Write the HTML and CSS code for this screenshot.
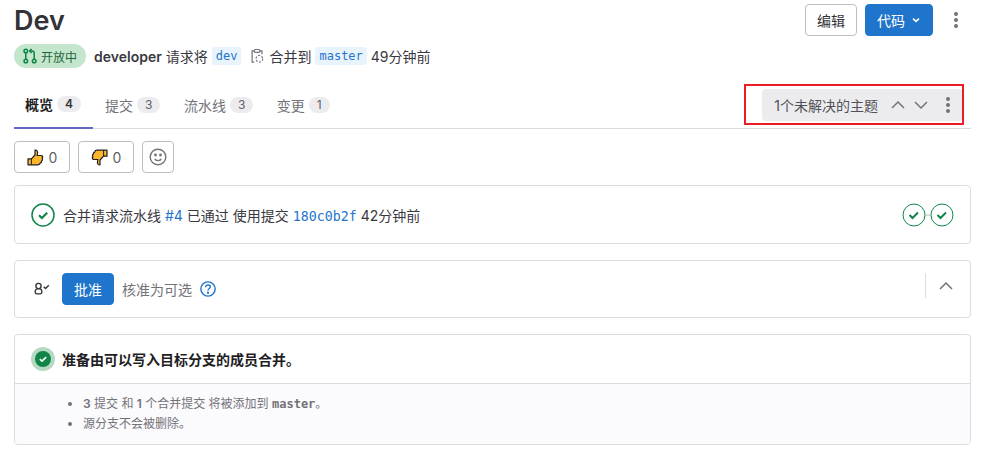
FILE: index.html
```html
<!DOCTYPE html>
<html lang="zh">
<head>
<meta charset="UTF-8" />
<title>Dev</title>
<link rel="stylesheet" href="styles.css">
</head>
<body>
<div class="title-row">
<h1>Dev</h1>
<div class="title-actions">
<button class="btn">编辑</button>
<button class="btn btn-primary">代码
<svg class="caret" width="10" height="10" viewBox="0 0 10 10"><path d="M2 3.600 5 6.400 8 3.600" fill="none" stroke="#fff" stroke-width="1.500"/></svg>
</button>
<span class="kebab kebab-top"><i></i><i></i><i></i></span>
</div>
</div>

<div class="meta-row">
<span class="status-pill">
<svg width="14" height="16" viewBox="0 0 14 16" fill="none" stroke="#108548" stroke-width="1.500"><circle cx="2.800" cy="3" r="1.800"/><circle cx="2.800" cy="13" r="1.800"/><circle cx="11.200" cy="13" r="1.800"/><path d="M2.800 5v6M11.200 11V5.500C11.200 4 10.400 3 9 3H7"/><path d="M8.600 1 6.600 3l2 2"/></svg>
开放中</span>
<b class="author">developer</b><span class="after-author">请求将</span>
<code class="ref">dev</code>
<svg class="copy-icon" width="13" height="16" viewBox="0 0 14 16" fill="none" stroke="#737278" stroke-width="1.300"><path d="M3.500 2.500H1.200v12h2.300M9.500 2.500h2.300v3.500"/><rect x="3.500" y="1" width="6" height="3" rx="1"/><circle cx="9" cy="11" r="3.600" stroke-dasharray="2.200 1.600"/></svg>
<span>合并到</span>
<code class="ref">master</code>
<span>49分钟前</span>
</div>

<div class="tabs">
<a class="tab active">概览 <span class="count">4</span></a>
<a class="tab">提交 <span class="count">3</span></a>
<a class="tab">流水线 <span class="count">3</span></a>
<a class="tab">变更 <span class="count">1</span></a>
<div class="threads">
<span class="threads-label">1个未解决的主题</span>
<svg width="14" height="14" viewBox="0 0 14 14" fill="none" stroke="#737278" stroke-width="1.500"><path d="M1 10 7 4l6 6"/></svg>
<svg width="14" height="14" viewBox="0 0 14 14" fill="none" stroke="#737278" stroke-width="1.500"><path d="M1 4l6 6 6-6"/></svg>
<span class="kebab"><i></i><i></i><i></i></span>
</div>
<div class="highlight"></div>
</div>

<div class="awards">
<button class="award">
<svg width="17" height="17" viewBox="0 0 17 17"><path d="M1 15.800V9.800h3.400L8 6V1.200c2-.2 2.900 1.300 2.500 3.300l-.4 2h3.900c1.700 0 2.200 1.800 1.100 2.600.8.900.5 2.200-.5 2.600.3 1-.3 2-1.300 2.200-.2 1-1 1.900-2.300 1.900z" fill="#fcb62c" stroke="#1f1e24" stroke-width="1.200" stroke-linejoin="round"/><path d="M4.400 10v5.800" stroke="#1f1e24" stroke-width="1"/></svg>
<span>0</span></button>
<button class="award">
<svg width="17" height="17" viewBox="0 0 17 17"><path d="M16 1.200v6h-3.400L9 11v4.800c-2 .2-2.900-1.300-2.500-3.300l.4-2H3c-1.700 0-2.200-1.800-1.100-2.600C1.100 7 1.400 5.700 2.400 5.300c-.3-1 .3-2 1.300-2.200C3.900 2.100 4.700 1.200 6 1.200z" fill="#fcb62c" stroke="#1f1e24" stroke-width="1.200" stroke-linejoin="round"/><path d="M12.600 1.200v6" stroke="#1f1e24" stroke-width="1"/></svg>
<span>0</span></button>
<button class="award award-add">
<svg width="18" height="18" viewBox="0 0 18 18" fill="none" stroke="#737278" stroke-width="1.400"><circle cx="9" cy="9" r="7.800"/><path d="M5.800 11c.7 1 1.900 1.600 3.200 1.600s2.500-.6 3.200-1.600"/><circle cx="6.500" cy="7" r=".7" fill="#737278"/><circle cx="11.500" cy="7" r=".7" fill="#737278"/></svg>
</button>
</div>

<div class="card pipeline">
<svg class="status-ring" width="24" height="24" viewBox="0 0 24 24" fill="none"><circle cx="12" cy="12" r="11" stroke="#108548" stroke-width="1.500"/><path d="M8 12.200l2.900 2.800L16.200 9.800" stroke="#108548" stroke-width="2.200"/></svg>
<span class="pipeline-text">合并请求流水线 <a>#4</a> 已通过 使用提交 <a class="sha">180c0b2f</a> 42分钟前</span>
<div class="stages">
<svg width="24" height="24" viewBox="0 0 24 24" fill="none"><circle cx="12" cy="12" r="11" stroke="#108548" stroke-width="1"/><path d="M7.500 12l3 3 5.500-5.500" stroke="#108548" stroke-width="2"/></svg>
<span class="stage-line"></span>
<svg width="24" height="24" viewBox="0 0 24 24" fill="none"><circle cx="12" cy="12" r="11" stroke="#108548" stroke-width="1"/><path d="M7.500 12l3 3 5.500-5.500" stroke="#108548" stroke-width="2"/></svg>
</div>
</div>

<div class="card approval">
<svg class="approver-icon" width="16" height="14" viewBox="0 0 18 16" fill="none" stroke="#333238" stroke-width="1.500"><circle cx="5" cy="4.500" r="3"/><path d="M5 7.500c-2.400 0-3.800 1.500-3.800 3.200v1c0 1.100.9 1.800 2 1.800h3.600c1.100 0 2-.7 2-1.800v-1c0-1.700-1.400-3.200-3.800-3.200z"/><path d="M11 5.500 13 7.500 16.800 3.600" stroke-width="1.600"/></svg>
<button class="btn btn-primary btn-approve">批准</button>
<span class="approval-note">核准为可选</span>
<svg class="help" width="16" height="16" viewBox="0 0 17 17" fill="none" stroke="#1f75cb" stroke-width="1.500"><circle cx="8.500" cy="8.500" r="7.600"/><path d="M6 6.600c0-1.500 1.100-2.300 2.500-2.300S11 5.100 11 6.500C11 8 8.500 8 8.500 10"/><circle cx="8.500" cy="12.400" r=".5" fill="#1f75cb"/></svg>
<div class="collapse">
<svg width="14" height="14" viewBox="0 0 14 14" fill="none" stroke="#737278" stroke-width="1.500"><path d="M1 10 7 4l6 6"/></svg>
</div>
</div>

<div class="card merge">
<div class="merge-head">
<span class="merge-status"><svg width="18" height="18" viewBox="0 0 18 18"><circle cx="9" cy="9" r="8" fill="#108548"/><path d="M5.800 9.200l2.200 2 4.200-4" fill="none" stroke="#fff" stroke-width="1.600"/></svg></span>
<strong>准备由可以写入目标分支的成员合并。</strong>
</div>
<ul class="merge-list">
<li><b>3</b> 提交 和 <b>1</b> 个合并提交 将被添加到 <code>master</code>。</li>
<li>源分支不会被删除。</li>
</ul>
</div>
</body>
</html>
```

FILE: styles.css
```css
* {
box-sizing: border-box;
margin: 0;
padding: 0;
}

body {
padding: 0 16px 0 14px;
background: #fff;
color: #3a383f;
font-family: 'Inter', 'Noto Sans CJK SC', sans-serif;
font-size: 14px;
overflow: hidden;
}

svg {
flex: none;
}

.title-row {
display: flex;
justify-content: space-between;
height: 44px;
padding-top: 4px;
}

h1 {
font-size: 27px;
font-weight: 600;
line-height: 34px;
color: #333238;
}

.title-actions {
display: flex;
align-items: flex-start;
gap: 8px;
}

.btn {
height: 32px;
padding: 0 11px;
border: 1px solid #bfbfc3;
border-radius: 4px;
background: #fff;
color: #333238;
font: inherit;
display: inline-flex;
align-items: center;
}

.btn-primary {
border-color: #1f75cb;
background: #1f75cb;
color: #fff;
gap: 5px;
}

.caret {
margin-left: 1px;
}

.kebab {
display: flex;
flex-direction: column;
gap: 2px;
width: 4px;
}

.kebab i {
width: 4px;
height: 4px;
border-radius: 50%;
background: #737278;
}

.kebab-top {
margin: 8px 13px 0 13px;
}

.meta-row {
display: flex;
align-items: center;
height: 24px;
}

.status-pill {
display: inline-flex;
align-items: center;
gap: 4px;
width: 72px;
height: 24px;
padding-left: 9px;
border-radius: 12px;
background: #c3e6cd;
color: #24663b;
font-size: 12px;
}

.author {
margin-left: 8px;
font-weight: 600;
}

.after-author {
margin-left: 4px;
}

.ref {
margin: 0 4px;
padding: 1px 4px;
border-radius: 3px;
background: #e9f3fc;
color: #1f75cb;
font-family: 'DejaVu Sans Mono', monospace;
font-size: 12px;
line-height: 16px;
}

.copy-icon {
margin: 0 5px 0 6px;
}

.tabs {
position: relative;
display: flex;
align-items: center;
height: 48px;
margin-top: 13px;
padding-right: 8px;
border-bottom: 1px solid #dcdcde;
}

.tab {
display: flex;
align-items: center;
gap: 4px;
height: 48px;
padding: 0 11.500px 0 12px;
color: #737278;
}

.tab.active {
padding: 0 12px 0 11px;
color: #1f1e24;
font-weight: 600;
border-bottom: 2px solid #6666c4;
margin-bottom: -1px;
}

.count {
height: 16px;
padding: 0 8px;
border-radius: 8px;
background: #ececef;
color: #626168;
font-size: 12px;
font-weight: 400;
line-height: 16px;
text-align: center;
}

.tab.active .count {
color: #333238;
font-weight: 600;
}

.threads {
display: flex;
align-items: center;
height: 32px;
margin-left: auto;
padding: 0 13px 0 12px;
border-radius: 4px;
background: #ececef;
color: #535158;
font-size: 14px;
}

.threads-label {
margin-right: 13px;
}

.threads svg + svg {
margin: 0 18px 0 9px;
}

.highlight {
position: absolute;
top: 3px;
right: 7px;
width: 220px;
height: 41px;
border: 2px solid #ed1c24;
}

.awards {
display: flex;
gap: 8px;
margin-top: 12px;
}

.award {
display: flex;
align-items: center;
justify-content: center;
gap: 5px;
width: 56px;
height: 32px;
border: 1px solid #bfbfc3;
border-radius: 4px;
background: #fff;
color: #626168;
font: inherit;
}

.award-add {
width: 32px;
}

.card {
border: 1px solid #dcdcde;
border-radius: 4px;
}

.pipeline {
display: flex;
align-items: center;
height: 59px;
margin-top: 12px;
padding: 0 16px;
}

.pipeline-text {
margin-left: 8px;
}

.pipeline-text a {
color: #1f75cb;
}

.sha {
font-family: 'DejaVu Sans Mono', monospace;
font-size: 13.300px;
}

.stages {
display: flex;
align-items: center;
margin-left: auto;
}

.stage-line {
width: 4px;
height: 2px;
background: #dcdcde;
}

.approval {
display: flex;
align-items: center;
height: 58px;
margin-top: 16px;
padding: 0 16px;
}

.approver-icon {
margin: 0 12px 0 3px;
}

.approval-note {
margin: 0 8px;
color: #737278;
}

.collapse {
display: flex;
align-items: center;
align-self: flex-start;
height: 25px;
margin: 12px 1px 0 auto;
padding-left: 13px;
border-left: 1px solid #dcdcde;
}

.merge {
margin-top: 16px;
height: 111px;
overflow: hidden;
}

.merge-head {
display: flex;
align-items: center;
gap: 7px;
height: 49px;
padding: 0 16px;
border-bottom: 1px solid #dcdcde;
}

.merge-status {
display: flex;
align-items: center;
justify-content: center;
width: 24px;
height: 24px;
border-radius: 50%;
background: #b5d9c1;
}

.merge-head strong {
font-size: 14px;
font-weight: 600;
color: #1f1e24;
}

.merge-list {
height: 61px;
padding: 10px 0 0 68px;
background: #fbfafd;
color: #737278;
font-size: 12px;
line-height: 20px;
}

.merge-list b {
font-weight: 600;
}

.merge-list code {
font-family: 'DejaVu Sans Mono', monospace;
font-weight: 700;
}
```
